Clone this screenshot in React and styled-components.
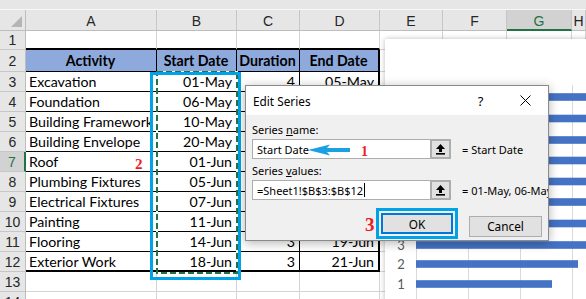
import React from "react";
import styled, { createGlobalStyle } from "styled-components";

const GlobalStyle = createGlobalStyle`
  html, body {
    margin: 0;
    padding: 0;
    background: #fff;
    overflow: hidden;
  }
`;

const COLS = ["A", "B", "C", "D", "E", "F", "G", "H"];
const COL_WIDTHS = "26px 131px 80px 63px 80px 63px 64px 65px 1fr";
const ROW_HEIGHTS = "21px 19px 22px repeat(12, 20px)";

const ROWS = [
  ["Excavation", "01-May", "4", "05-May"],
  ["Foundation", "06-May", "4", "10-May"],
  ["Building Framework", "10-May", "10", "20-May"],
  ["Building Envelope", "20-May", "11", "31-May"],
  ["Roof", "01-Jun", "4", "05-Jun"],
  ["Plumbing Fixtures", "05-Jun", "2", "07-Jun"],
  ["Electrical Fixtures", "07-Jun", "4", "11-Jun"],
  ["Painting", "11-Jun", "3", "14-Jun"],
  ["Flooring", "14-Jun", "3", "19-Jun"],
  ["Exterior Work", "18-Jun", "3", "21-Jun"]
];

const Sheet = styled.div`
  position: relative;
  width: 586px;
  height: 299px;
  overflow: hidden;
  background: #fff;
  font-family: Lato, "Liberation Sans", sans-serif;
`;

const TopStrip = styled.div`
  height: 10px;
  background: #e6e6e6;
  border-bottom: 1px solid #f7f7f7;
  box-sizing: border-box;
`;

const Grid = styled.div`
  display: grid;
  grid-template-columns: ${COL_WIDTHS};
  grid-template-rows: ${ROW_HEIGHTS};
`;

const Corner = styled.div`
  position: relative;
  background: #e6e6e6;
  border-right: 1px solid #bdbdbd;
  border-bottom: 1px solid #bdbdbd;
  &::after {
    content: "";
    position: absolute;
    right: 3px;
    bottom: 3px;
    border-style: solid;
    border-width: 0 0 11px 11px;
    border-color: transparent transparent #b5b5b5 transparent;
  }
`;

const ColHead = styled.div`
  display: flex;
  align-items: center;
  justify-content: center;
  padding-top: 2px;
  box-sizing: border-box;
  background: ${p => (p.$active ? "#d2d2d2" : "#e6e6e6")};
  color: ${p => (p.$active ? "#217346" : "#262626")};
  border-right: 1px solid #c6c6c6;
  border-bottom: ${p => (p.$active ? "2px solid #217346" : "1px solid #bdbdbd")};
  font-family: "Liberation Sans", sans-serif;
  font-size: 14px;
`;

const RowHead = styled.div`
  display: flex;
  align-items: center;
  justify-content: center;
  box-sizing: border-box;
  background: ${p => (p.$active ? "#d2d2d2" : "#e6e6e6")};
  color: ${p => (p.$active ? "#217346" : "#262626")};
  border-bottom: 1px solid #c6c6c6;
  border-right: ${p => (p.$active ? "2px solid #217346" : "1px solid #bdbdbd")};
  font-family: "Liberation Sans", sans-serif;
  font-size: 14px;
`;

const Cell = styled.div`
  display: flex;
  align-items: center;
  justify-content: ${p => (p.$align === "right" ? "flex-end" : p.$align === "center" ? "center" : "flex-start")};
  padding: 0 4px 0 3px;
  box-sizing: border-box;
  overflow: hidden;
  white-space: nowrap;
  font-size: 14.2px;
  font-weight: ${p => (p.$bold ? 700 : 400)};
  color: #000;
  background: ${p => (p.$head ? "#8ea9db" : "#fff")};
  border-right: ${p => p.$right || "1px solid #d4d4d4"};
  border-bottom: ${p => p.$bottom || "1px solid #d4d4d4"};
`;

const Chart = styled.div`
  position: absolute;
  left: 385px;
  top: 39px;
  width: 220px;
  height: 280px;
  background: #fff;
  box-shadow: 0 0 5px rgba(0, 0, 0, 0.28);
`;

const SelectBox = styled.div`
  position: absolute;
  left: 150px;
  top: 72px;
  width: 91px;
  height: 208px;
  box-sizing: border-box;
  border: 3px solid #00a2e8;
`;

const Ants = styled.svg`
  position: absolute;
  left: 155px;
  top: 71px;
`;

const Marker = styled.span`
  position: absolute;
  left: ${p => p.$x}px;
  top: ${p => p.$y}px;
  font-family: "Liberation Serif", serif;
  font-weight: 700;
  font-size: ${p => p.$size}px;
  line-height: 1;
  color: #ed1c24;
`;

const Pointer = styled.svg`
  position: absolute;
  left: 306px;
  top: 142px;
`;

const Dialog = styled.div`
  position: absolute;
  left: 245px;
  top: 85px;
  width: 304px;
  height: 156px;
  box-sizing: border-box;
  display: flex;
  flex-direction: column;
  overflow: hidden;
  background: #f0f0f0;
  border: 1px solid #8a8a8a;
  box-shadow: 0 2px 10px rgba(0, 0, 0, 0.3);
  font-family: "Noto Sans", "Open Sans", sans-serif;
  font-size: 11px;
  color: #000;
`;

const TitleBar = styled.div`
  height: 29px;
  display: flex;
  align-items: center;
  padding: 0 0 0 7px;
  background: #fff;
  font-size: 11.8px;
`;

const Title = styled.span`
  flex: 1;
`;

const TitleButton = styled.span`
  width: 45px;
  display: flex;
  justify-content: center;
  align-items: center;
  font-size: 13px;
`;

const Body = styled.div`
  flex: 1;
  display: flex;
  flex-direction: column;
  padding: 8px 6px 0 6px;
`;

const Label = styled.div`
  height: 14px;
  line-height: 14px;
  margin-bottom: 2px;
  u {
    text-decoration: underline;
    text-underline-offset: 1px;
  }
`;

const FieldRow = styled.div`
  display: flex;
  align-items: center;
  height: 20px;
  margin-bottom: ${p => p.$gap}px;
  white-space: nowrap;
`;

const Input = styled.div`
  flex: none;
  width: 178px;
  height: 20px;
  box-sizing: border-box;
  display: flex;
  align-items: center;
  padding-left: 4px;
  background: #fff;
  border: 1px solid #adadad;
  border-right: none;
`;

const Caret = styled.span`
  display: inline-block;
  width: 1px;
  height: 14px;
  margin-left: 1px;
  background: #000;
`;

const RefButton = styled.div`
  flex: none;
  width: 21px;
  height: 20px;
  box-sizing: border-box;
  display: flex;
  align-items: center;
  justify-content: center;
  background: #e1e1e1;
  border: 2px solid #adadad;
`;

const Preview = styled.span`
  flex: none;
  margin-left: 11px;
`;

const ButtonRow = styled.div`
  display: flex;
  justify-content: flex-end;
  align-items: center;
  gap: 10px;
`;

const Focus = styled.div`
  padding: 2px;
  margin-right: 1px;
  border: 3px solid #00a2e8;
  margin-top: -5px;
`;

const Button = styled.div`
  width: ${p => p.$w}px;
  height: 21px;
  box-sizing: border-box;
  display: flex;
  align-items: center;
  justify-content: center;
  background: #e1e1e1;
  border: ${p => (p.$primary ? "2px solid #0078d7" : "1px solid #adadad")};
  font-size: 11.8px;
`;

const RefIcon = () => (
  <svg width="11" height="12" viewBox="0 0 11 12">
    <path d="M5.5 1 L10 6 H7 V9 H4 V6 H1 Z" fill="#000" />
    <rect x="1" y="10" width="9" height="1.6" fill="#000" />
  </svg>
);

const CloseIcon = () => (
  <svg width="11" height="11" viewBox="0 0 11 11">
    <path d="M0.5 0.5 L10.5 10.5 M10.5 0.5 L0.5 10.5" stroke="#000" strokeWidth="1" />
  </svg>
);

const BAR_Y = [58, 79.5, 101, 121.5, 142.5, 163, 184.5, 206, 225, 245];
const BAR_W = [200, 200, 200, 200, 200, 200, 200, 200, 162, 136];

const GanttChart = () => (
  <Chart>
    <svg width="220" height="280">
      {[31, 83, 135, 187].map(x => (
        <line key={x} x1={x + 0.5} x2={x + 0.5} y1="46" y2="280" stroke="#d9d9d9" />
      ))}
      {BAR_Y.map((y, i) => (
        <g key={y}>
          <rect x="31" y={y - 3.8} width={BAR_W[i]} height="7.6" fill="#4472c4" />
          <text
            x="16"
            y={y + 4.5}
            fontSize="13"
            fill="#595959"
            fontFamily="Lato, 'Liberation Sans', sans-serif"
            textAnchor="middle"
          >
            {10 - i}
          </text>
        </g>
      ))}
    </svg>
  </Chart>
);

const App = () => {
  const thick = "2px solid #000";
  const thin = "1px solid #000";

  return (
    <>
      <GlobalStyle />
      <Sheet>
        <TopStrip />
        <Grid>
          <Corner />
          {COLS.map(c => (
            <ColHead key={c} $active={c === "G"}>
              {c}
            </ColHead>
          ))}

          <RowHead>1</RowHead>
          {COLS.map((c, i) => (
            <Cell key={c} $bottom={i < 4 ? thick : undefined} />
          ))}

          <RowHead>2</RowHead>
          {["Activity", "Start Date", "Duration", "End Date"].map((t, i) => (
            <Cell key={t} $head $bold $align="center" $bottom={thin} $right={i === 3 ? thick : thin}>
              {t}
            </Cell>
          ))}
          {COLS.slice(4).map(c => (
            <Cell key={c} />
          ))}

          {ROWS.map((r, ri) => {
            const n = ri + 3;
            const last = ri === ROWS.length - 1;
            return (
              <React.Fragment key={n}>
                <RowHead $active={n === 7}>{n}</RowHead>
                {r.map((v, i) => (
                  <Cell
                    key={i}
                    $align={i === 0 ? "left" : "right"}
                    $bottom={last ? thick : thin}
                    $right={i === 3 ? thick : thin}
                  >
                    {v}
                  </Cell>
                ))}
                {COLS.slice(4).map(c => (
                  <Cell key={c} />
                ))}
              </React.Fragment>
            );
          })}

          {[13, 14].map(n => (
            <React.Fragment key={n}>
              <RowHead>{n}</RowHead>
              {COLS.map(c => (
                <Cell key={c} />
              ))}
            </React.Fragment>
          ))}
        </Grid>

        <GanttChart />

        <Ants width="84" height="204">
          <rect x="2" y="1" width="80" height="201" fill="none" stroke="#fff" strokeWidth="2" />
          <rect
            x="2"
            y="1"
            width="80"
            height="201"
            fill="none"
            stroke="#217346"
            strokeWidth="2"
            strokeDasharray="6 3"
          />
        </Ants>
        <SelectBox />

        <Marker $x={135} $y={157} $size={15}>
          2
        </Marker>

        <Dialog>
          <TitleBar>
            <Title>Edit Series</Title>
            <TitleButton>?</TitleButton>
            <TitleButton>
              <CloseIcon />
            </TitleButton>
          </TitleBar>
          <Body>
            <Label>
              Series <u>n</u>ame:
            </Label>
            <FieldRow $gap={5}>
              <Input>Start Date</Input>
              <RefButton>
                <RefIcon />
              </RefButton>
              <Preview>= Start Date</Preview>
            </FieldRow>
            <Label>
              Series <u>v</u>alues:
            </Label>
            <FieldRow $gap={13}>
              <Input>
                =Sheet1!$B$3:$B$12
                <Caret />
              </Input>
              <RefButton>
                <RefIcon />
              </RefButton>
              <Preview>= 01-May, 06-May</Preview>
            </FieldRow>
            <ButtonRow>
              <Focus>
                <Button $primary $w={72}>
                  OK
                </Button>
              </Focus>
              <Button $w={73}>Cancel</Button>
            </ButtonRow>
          </Body>
        </Dialog>

        <Pointer width="46" height="16">
          <polygon points="2,8 24,2.5 21,6 44,6 44,10 21,10 24,13.5" fill="#1ba1e2" />
        </Pointer>
        <Marker $x={361} $y={145} $size={14}>
          1
        </Marker>
        <Marker $x={365} $y={215} $size={19}>
          3
        </Marker>
      </Sheet>
    </>
  );
};

export default App;
